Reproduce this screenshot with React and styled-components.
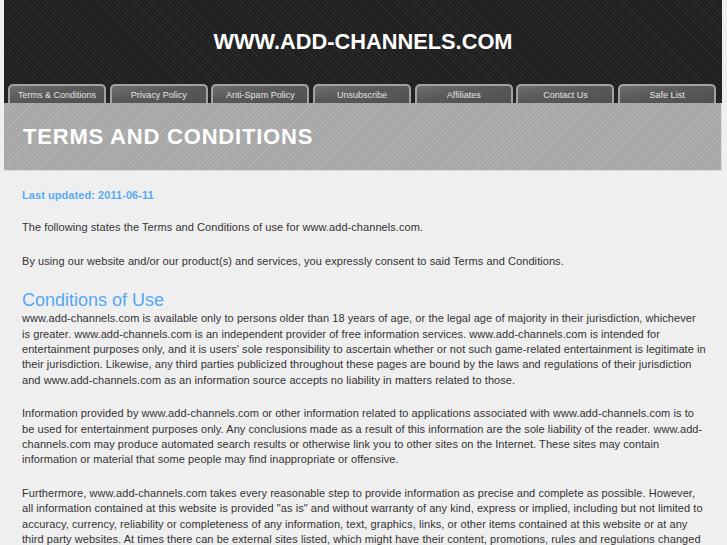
import React from "react";
import styled, { createGlobalStyle } from "styled-components";

const GlobalStyle = createGlobalStyle`
    html, body {
        margin: 0;
        padding: 0;
        background: #efefef;
        font-family: "Liberation Sans", Arial, sans-serif;
    }
`;

const tabs = [
    "Terms & Conditions",
    "Privacy Policy",
    "Anti-Spam Policy",
    "Unsubscribe",
    "Affiliates",
    "Contact Us",
    "Safe List",
];

function App() {
    return (
        <>
            <GlobalStyle />
            <Wrapper>
                <Header>
                    <SiteName>WWW.ADD-CHANNELS.COM</SiteName>
                    <TabBar>
                        {tabs.map((t) => (
                            <Tab key={t}>{t}</Tab>
                        ))}
                    </TabBar>
                </Header>
                <Banner>
                    <PageTitle>TERMS AND CONDITIONS</PageTitle>
                </Banner>
                <Content>
                    <Updated>Last updated: 2011-06-11</Updated>
                    <P>
                        The following states the Terms and Conditions of use for
                        www.add-channels.com.
                    </P>
                    <P>
                        By using our website and/or our product(s) and services, you
                        expressly consent to said Terms and Conditions.
                    </P>
                    <H2>Conditions of Use</H2>
                    <P>
                        www.add-channels.com is available only to persons older than 18
                        years of age, or the legal age of majority in their jurisdiction,
                        whichever is greater. www.add-channels.com is an independent
                        provider of free information services. www.add-channels.com is
                        intended for entertainment purposes only, and it is users' sole
                        responsibility to ascertain whether or not such game-related
                        entertainment is legitimate in their jurisdiction. Likewise, any
                        third parties publicized throughout these pages are bound by the
                        laws and regulations of their jurisdiction and www.add-channels.com
                        as an information source accepts no liability in matters related to
                        those.
                    </P>
                    <P>
                        Information provided by www.add-channels.com or other information
                        related to applications associated with www.add-channels.com is to
                        be used for entertainment purposes only. Any conclusions made as a
                        result of this information are the sole liability of the reader.
                        www.add-channels.com may produce automated search results or
                        otherwise link you to other sites on the Internet. These sites may
                        contain information or material that some people may find
                        inappropriate or offensive.
                    </P>
                    <P>
                        Furthermore, www.add-channels.com takes every reasonable step to
                        provide information as precise and complete as possible. However,
                        all information contained at this website is provided "as is" and
                        without warranty of any kind, express or implied, including but not
                        limited to accuracy, currency, reliability or completeness of any
                        information, text, graphics, links, or other items contained at this
                        website or at any third party websites. At times there can be
                        external sites listed, which might have their content, promotions,
                        rules and regulations changed without notice.
                    </P>
                </Content>
            </Wrapper>
        </>
    );
}

export default App;

// styled-components

const Wrapper = styled.div`
    width: 718px;
    margin-left: 4px;
`;

const Header = styled.div`
    height: 103px;
    display: flex;
    flex-direction: column;
    background-color: #222;
    background-image: repeating-linear-gradient(
        45deg,
        #1f1f1f 0px,
        #1f1f1f 2px,
        #2c2c2c 2px,
        #2c2c2c 3px
    );
`;

const SiteName = styled.h1`
    margin: 0;
    height: 84px;
    display: flex;
    align-items: center;
    justify-content: center;
    color: #fff;
    font-size: 21.8px;
    font-weight: bold;
`;

const TabBar = styled.div`
    display: flex;
    gap: 3.7px;
    padding-left: 4px;
    height: 19px;
`;

const Tab = styled.div`
    width: 98px;
    box-sizing: border-box;
    border: 2px solid #a2a2a2;
    border-bottom: none;
    border-radius: 5px 5px 0 0;
    background: linear-gradient(170deg, #707070 0%, #5a5a5a 40%, #505050 100%);
    color: #e4e4e4;
    font-size: 9px;
    display: flex;
    align-items: center;
    justify-content: center;
    white-space: nowrap;
    padding-top: 1px;
`;

const Banner = styled.div`
    height: 68px;
    display: flex;
    align-items: center;
    padding-left: 19px;
    border-right: 1px solid #dcdcdc;
    border-bottom: 1px solid #dcdcdc;
    box-sizing: border-box;
    background-color: #aaa;
    background-image: repeating-linear-gradient(
        -45deg,
        #a6a6a6 0px,
        #a6a6a6 2px,
        #b2b2b2 2px,
        #b2b2b2 3px
    );
`;

const PageTitle = styled.h2`
    margin: 0;
    color: #fff;
    font-size: 22px;
    font-weight: bold;
    letter-spacing: 0.8px;
`;

const Content = styled.div`
    padding: 17px 16px 0 18px;
    color: #333;
    font-size: 11px;
    line-height: 15.4px;
    letter-spacing: 0.065px;
`;

const Updated = styled.p`
    margin: 0 0 17px;
    color: #5aaaf2;
    font-weight: bold;
`;

const P = styled.p`
    margin: 0 0 18px;
`;

const H2 = styled.h3`
    margin: 20px 0 0;
    color: #55a8f4;
    font-size: 18px;
    font-weight: normal;
    line-height: 22px;
    letter-spacing: 0;
`;
